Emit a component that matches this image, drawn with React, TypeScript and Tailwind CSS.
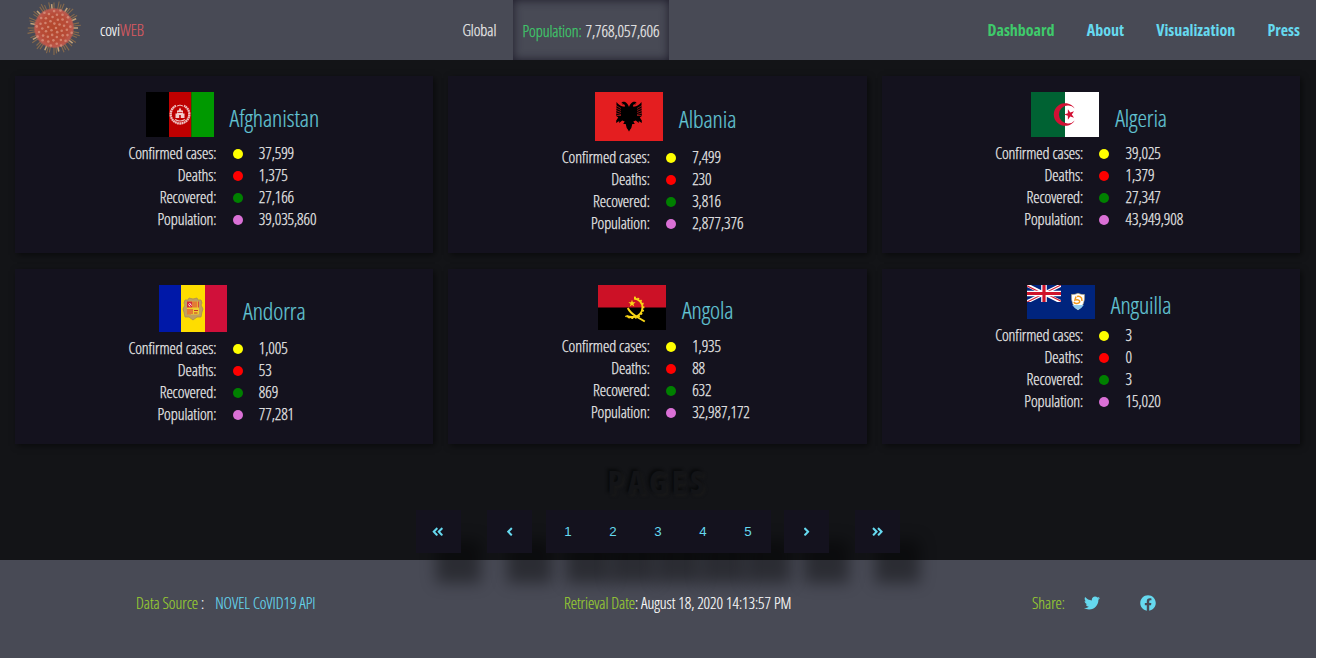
import type { ReactNode } from "react";
import {
  FaAngleDoubleLeft,
  FaAngleDoubleRight,
  FaAngleLeft,
  FaAngleRight,
  FaFacebook,
  FaTwitter,
} from "react-icons/fa";

function star(cx: number, cy: number, r: number, turn = -90) {
  return Array.from({ length: 10 }, (_, i) => {
    const rad = i % 2 ? r * 0.4 : r;
    const a = ((turn + i * 36) * Math.PI) / 180;
    return `${cx + rad * Math.cos(a)},${cy + rad * Math.sin(a)}`;
  }).join(" ");
}

function Virus() {
  const spikes = Array.from({ length: 48 }, (_, i) => {
    const a = (i * Math.PI * 2) / 48 + ((i * 5) % 3) * 0.03;
    const r = 24 + ((i * 7) % 5) * 0.75;
    return { x: 27 + r * Math.cos(a), y: 27 + r * Math.sin(a), x1: 27 + 17 * Math.cos(a), y1: 27 + 17 * Math.sin(a) };
  });
  const dots = Array.from({ length: 46 }, (_, i) => {
    const r = 19 * Math.sqrt((i + 0.5) / 46);
    const a = i * 2.39996;
    return { x: 27 + r * Math.cos(a), y: 27 + r * Math.sin(a) };
  });
  return (
    <svg width="54" height="54" viewBox="0 0 54 54">
      <defs>
        <radialGradient id="virus">
          <stop offset="0" stopColor="#b4482c" />
          <stop offset="0.7" stopColor="#b84c38" />
          <stop offset="0.92" stopColor="#bd584c" />
          <stop offset="1" stopColor="#bd584c" stopOpacity="0.5" />
        </radialGradient>
      </defs>
      {spikes.map((s, i) => (
        <line key={i} x1={s.x1} y1={s.y1} x2={s.x} y2={s.y} stroke={i % 5 === 0 ? "#c4a278" : "#876a4c"} strokeWidth={i % 5 === 0 ? 1.5 : 1.1} />
      ))}
      <circle cx="27" cy="27" r="20" fill="url(#virus)" />
      {dots.map((d, i) => (
        <circle key={i} cx={d.x} cy={d.y} r="1.3" fill="#d99680" opacity="0.75" />
      ))}
    </svg>
  );
}

function Afghanistan() {
  return (
    <svg width="68" height="45" viewBox="0 0 68 45">
      <rect width="68" height="45" fill="#000" />
      <rect x="23" width="22.5" height="45" fill="#be0000" />
      <rect x="45.3" width="22.7" height="45" fill="#009900" />
      <g fill="none" stroke="#efc0c0">
        <path d="M30 13.800A9.300 9.300 0 1 0 38 13.800" strokeWidth="2.300" strokeDasharray="1.800 .4" />
        <path d="M29 27.500q5 3 10 0" strokeWidth="1.200" />
        <path d="M31 14a6 6 0 0 1 6 0" />
      </g>
      <path d="M29.500 26v-4.500h1.500v-3h1.500l1.500-3 1.500 3h1.500v3h1.500v4.500z" fill="#f2cccc" />
      <path d="M33.200 26v-3h1.600v3zM31.500 20h5v.8h-5z" fill="#be0000" />
    </svg>
  );
}

function Albania() {
  const half = (
    <g>
      <path d="M34.200 15.500c-.8-2.500-2-4.500-4-5.500-2-.8-3.500 0-4 1.200l2-.2c-1 .5-1 1-.8 1.500l1.500-.3c1 .5 1.200 1.300.8 2.600l-1.700-.3c-2.500-.6-4.500-2-6.500-4.500l-.3 14 2 1.500-2 3 0 2.500 3-2 0 2 3-2.500 2.500 1-1.500 2.500 2.500 0 1 4 2.500 3.500z" fill="#000" />
      <path d="M21 13.500l5 3M21 16l5 2.500M21 18.500l5 2M21 21l5 1.500M21.500 23.500h4.500" stroke="#e41e20" strokeWidth=".6" />
    </g>
  );
  return (
    <svg width="68" height="49" viewBox="0 0 68 49">
      <rect width="68" height="49" fill="#e41e20" />
      {half}
      <g transform="translate(68 0) scale(-1 1)">{half}</g>
    </svg>
  );
}

function Algeria() {
  return (
    <svg width="68" height="45" viewBox="0 0 68 45">
      <rect width="68" height="45" fill="#fff" />
      <rect width="34" height="45" fill="#006233" />
      <path d="M43.700 16.600A11.300 11.300 0 1 0 43.700 28.400A9 9 0 1 1 43.700 16.600z" fill="#d21034" />
      <polygon points={star(38.6, 22.5, 5.5, -180)} fill="#d21034" />
    </svg>
  );
}

function Andorra() {
  return (
    <svg width="68" height="47" viewBox="0 0 68 47">
      <rect width="68" height="47" fill="#0018a8" />
      <rect x="22" width="24" height="47" fill="#fedd00" />
      <rect x="46" width="22" height="47" fill="#d0103a" />
      <path d="M26 15l3 0 1-2 4 1 4-1 1 2 3 0 1 3-1 2 2 4-1 3-1 5-4 0-4 3-4-3-4 0-1-5-1-3 2-4-1-2z" fill="#c0a060" stroke="#a98c55" strokeWidth=".8" />
      <rect x="28" y="16.500" width="12" height="13" rx="1" fill="#f0cf30" />
      <rect x="28" y="16.500" width="5.500" height="6" fill="#d5283a" />
      <path d="M30.500 18l2 2.500M29.500 19.500l1.500 2" stroke="#fff" strokeWidth="1" />
      <path d="M35 16.500v6M37 16.500v6M39.300 16.500v6M29 24v5.500M31 24v5.500M33 24v5" stroke="#d5283a" />
      <path d="M35 25.500h4M35 28h3.500" stroke="#c4342c" strokeWidth="1.200" />
    </svg>
  );
}

function Angola() {
  return (
    <svg width="68" height="45" viewBox="0 0 68 45">
      <rect width="68" height="45" fill="#000" />
      <rect width="68" height="22.500" fill="#cc1126" />
      <g fill="none" stroke="#f9d616">
        <path d="M36 13.500c5 .3 8.500 4.200 8.500 9s-3.500 9-8.500 9.500q-4 .5-7.500-1" strokeWidth="2" />
        <path d="M36 12.500c6 .3 9.500 5 9.500 10s-3.500 10-9.500 10.500q-4.500.5-8.500-2" strokeWidth="1.800" strokeDasharray="1.800 1.700" />
        <path d="M29.800 23q2.500 5 8.500 8.500l8.500 5" strokeWidth="2" />
      </g>
      <polygon points={star(34, 18.5, 3.8)} fill="#f9d616" />
    </svg>
  );
}

function Anguilla() {
  return (
    <svg width="68" height="34" viewBox="0 0 68 34">
      <rect width="68" height="34" fill="#00247d" />
      <svg width="34" height="17" viewBox="0 0 34 17">
        <path d="M0 0l34 17M34 0L0 17" stroke="#fff" strokeWidth="3.400" />
        <path d="M0 .8l17 8.500M34 16.200L17 7.700M34 0L17 8.500M0 17l17-8.500" stroke="#cf142b" strokeWidth="1.100" />
        <path d="M17 0v17M0 8.500h34" stroke="#fff" strokeWidth="5.600" />
        <path d="M17 0v17M0 8.500h34" stroke="#cf142b" strokeWidth="3.200" />
      </svg>
      <path d="M44.500 9.500q2.500.5 6.500-1.200 4 1.700 6.500 1.200.7 11-6.500 15.500-7.200-4.500-6.500-15.500z" fill="#fff" stroke="#b9a878" strokeWidth=".6" />
      <path d="M45.200 20h11.600q-2 3.200-5.800 5-3.800-1.800-5.800-5z" fill="#8ecaf0" />
      <path d="M49 11.500l-1 3.500q3.500-1 4.500.8 1 2.200-2.500 2.700-2 .2-3.200-1.500M50 11.500q2.500-1 4.500 1.500l.5 3" fill="none" stroke="#f59a1b" strokeWidth="1.500" />
    </svg>
  );
}

interface Country {
  name: string;
  flag: ReactNode;
  values: string[];
  titlePad?: string;
}

const countries: Country[] = [
  { name: "Afghanistan", flag: <Afghanistan />, values: ["37,599", "1,375", "27,166", "39,035,860"], titlePad: "pt-[3.4px]" },
  { name: "Albania", flag: <Albania />, values: ["7,499", "230", "3,816", "2,877,376"] },
  { name: "Algeria", flag: <Algeria />, values: ["39,025", "1,379", "27,347", "43,949,908"], titlePad: "pt-[3.4px]" },
  { name: "Andorra", flag: <Andorra />, values: ["1,005", "53", "869", "77,281"] },
  { name: "Angola", flag: <Angola />, values: ["1,935", "88", "632", "32,987,172"] },
  { name: "Anguilla", flag: <Anguilla />, values: ["3", "0", "3", "15,020"], titlePad: "pt-[3.4px]" },
];

const rows = [
  { label: "Confirmed cases:", dot: "bg-[#ffff00]" },
  { label: "Deaths:", dot: "bg-[#ff0000]" },
  { label: "Recovered:", dot: "bg-[#008000]" },
  { label: "Population:", dot: "bg-[#da70d6]" },
];

function Card({ name, flag, values, titlePad = "pt-[2.4px]" }: Country) {
  return (
    <article className="bg-[#14121e] pt-4 pb-[19px] shadow-[2px_2px_6px_rgba(0,0,0,0.5)]">
      <div className="mb-[5px] flex items-center justify-center gap-4 pl-[16.4px]">
        {flag}
        <h2 className={`h-8 text-[24px] leading-8 tracking-[-0.08px] text-[#63c5d5] [-webkit-text-stroke:0.2px] ${titlePad}`}>{name}</h2>
      </div>
      {rows.map((row, i) => (
        <div key={row.label} className="flex h-[22px] items-center leading-[22px] tracking-[-0.07px] text-[#e8e8e8] [-webkit-text-stroke:0.25px]">
          <span className="w-[201.4px] text-right">{row.label}</span>
          <span className={`mt-[2px] ml-[16.2px] size-[10px] rounded-full ${row.dot}`} />
          <span className="ml-[16.2px]">{values[i]}</span>
        </div>
      ))}
    </article>
  );
}

function PageButton({ children }: { children: ReactNode }) {
  return (
    <button className="flex h-[43px] w-[45px] items-center justify-center bg-[#14121e] font-['Liberation_Sans',Arial,sans-serif] text-[13.333px] font-normal tracking-normal text-[#66d9ef] shadow-[20px_30px_15px_rgba(0,0,0,0.4)] [font-stretch:100%]">
      {children}
    </button>
  );
}

export default function App() {
  return (
    <div className="h-[658px] w-[1316px] overflow-hidden bg-[#131417] font-['Open_Sans',sans-serif] text-[16px] font-light tracking-[-0.05px] text-white [font-stretch:75%]">
      <header className="flex h-[60px] items-center bg-[#484a55]">
        <div className="mb-[4px] ml-[27px] h-[54px]"><Virus /></div>
        <div className="ml-[19px] w-[362.4px] [-webkit-text-stroke:0.15px]">
          covi<span className="text-[#dd5a62]">WEB</span>
        </div>
        <div className="w-[50.6px] text-[#e8e8e8] [-webkit-text-stroke:0.25px]">Global</div>
        <div className="flex h-full w-[156px] items-center justify-center pt-[2px] whitespace-nowrap text-[#e8e8e8] shadow-[inset_0_0_10px_#1f1d2b] [-webkit-text-stroke:0.25px]">
          <span className="mr-1 text-[#3fca6b]">Population:</span>7,768,057,606
        </div>
        <nav className="mr-4 ml-auto flex gap-[32.3px] font-bold tracking-[-0.03px] text-[#66d9ef]">
          <a className="text-[#3fca6b]">Dashboard</a>
          <a>About</a>
          <a>Visualization</a>
          <a>Press</a>
        </nav>
      </header>
      <main className="h-[500px] pt-4">
        <section className="mr-4 ml-[15px] grid grid-cols-3 gap-x-[15.2px] gap-y-4">
          {countries.map((c) => (
            <Card key={c.name} {...c} />
          ))}
        </section>
        <h2 className="mt-[16px] h-[44px] text-center text-[32px] leading-[44px] font-bold tracking-[4.5px] text-[#131417] [text-shadow:-2px_-2px_3px_#090a0b,2px_2px_3px_#191919]">
          PAGES
        </h2>
        <div className="mt-[6px] ml-[415.6px] flex">
          <PageButton><FaAngleDoubleLeft /></PageButton>
          <div className="ml-[26.7px]"><PageButton><FaAngleLeft /></PageButton></div>
          <div className="ml-[13.3px] flex">
            {[1, 2, 3, 4, 5].map((n) => (
              <PageButton key={n}>{n}</PageButton>
            ))}
          </div>
          <div className="ml-[13.7px]"><PageButton><FaAngleRight /></PageButton></div>
          <div className="ml-[26.1px]"><PageButton><FaAngleDoubleRight /></PageButton></div>
        </div>
      </main>
      <footer className="flex h-[98px] items-start bg-[#484a55] pt-[31px] [-webkit-text-stroke:0.15px]">
        <div className="ml-[136px] w-[428px] whitespace-pre">
          <span className="text-[#9acd32]">Data Source</span> :<span className="ml-[11px] text-[#66d9ef]">NOVEL CoVID19 API</span>
        </div>
        <div className="w-[468px]">
          <span className="text-[#9acd32]">Retrieval Date</span>: August 18, 2020 14:13:57 PM
        </div>
        <div className="flex items-center text-[#66d9ef]">
          <span className="w-[52px] text-[#9acd32]">Share:</span>
          <FaTwitter />
          <FaFacebook className="ml-10" />
        </div>
      </footer>
    </div>
  );
}
